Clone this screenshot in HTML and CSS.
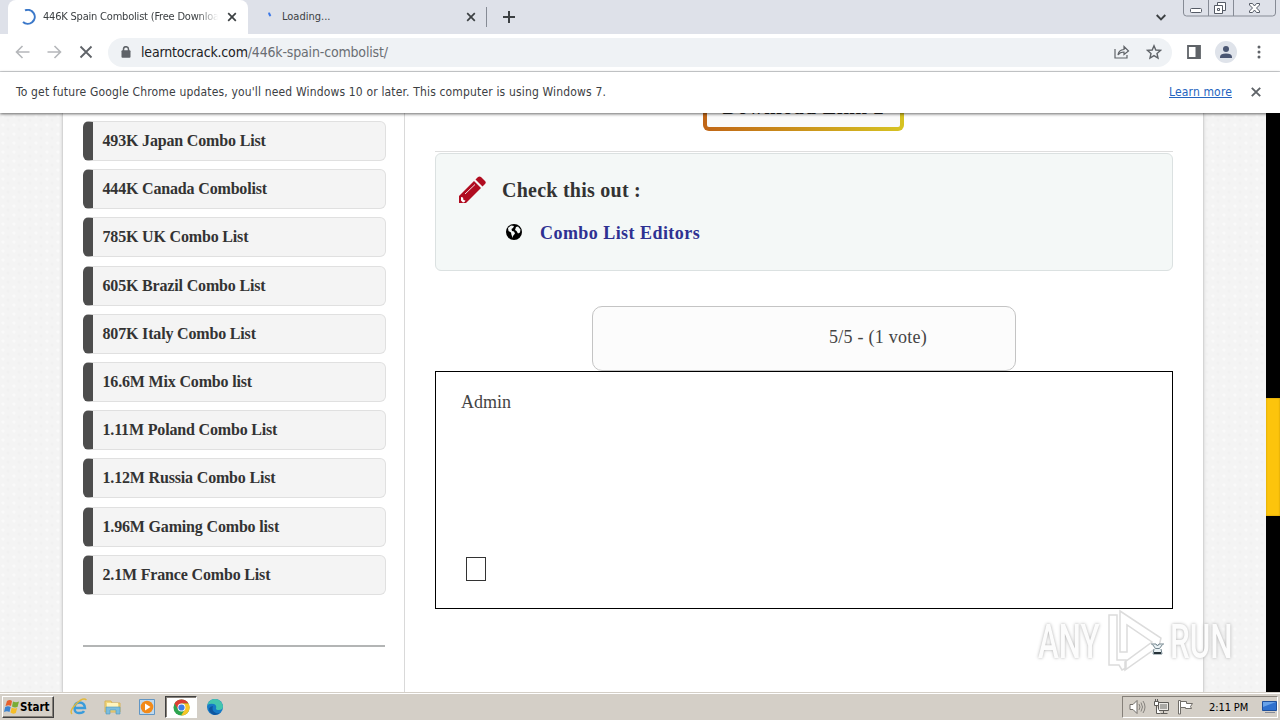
FILE: index.html
```html
<!DOCTYPE html>
<html lang="en">
<head>
    <meta charset="UTF-8">
    <meta name="viewport" content="width=device-width, initial-scale=1.0">
    <title>446K Spain Combolist</title>
    <link rel="stylesheet" href="styles.css">
</head>
<body>
    <!-- Tab strip -->
    <div class="tabs">
        <div class="tab active">
            <svg class="spinner" width="16" height="16" viewBox="0 0 16 16"><path d="M5 1.4A7 7 0 1 1 3 13" fill="none" stroke="#3b78c9" stroke-width="2"/></svg>
            <span class="tab-title fade">446K Spain Combolist (Free Download)</span>
            <svg width="10" height="10" viewBox="0 0 10 10"><path d="M1.2 1.2l7.6 7.6M8.8 1.2L1.2 8.8" stroke="#3c4043" stroke-width="1.7"/></svg>
        </div>
        <div class="tab second">
            <svg class="spinner" width="16" height="16" viewBox="0 0 16 16"><path d="M3 3.6Q3.2 5.6 4.6 7" fill="none" stroke="#3b78e7" stroke-width="2"/></svg>
            <span class="tab-title">Loading...</span>
            <svg width="10" height="10" viewBox="0 0 10 10"><path d="M1.2 1.2l7.6 7.6M8.8 1.2L1.2 8.8" stroke="#3c4043" stroke-width="1.7"/></svg>
        </div>
        <span class="tab-line"></span>
        <svg class="plus" width="12" height="12" viewBox="0 0 12 12"><path d="M6 0v12M0 6h12" stroke="#3c4043" stroke-width="2"/></svg>
        <svg class="tab-search" width="10" height="7" viewBox="0 0 10 7"><path d="M.7 1L5 5.3 9.3 1" fill="none" stroke="#3c4043" stroke-width="1.9"/></svg>
        <svg class="win-buttons" width="93" height="17" viewBox="0 0 93 17">
            <path d="M.5 0v13q0 3 3 3h86q3 0 3-3V0M25.5 0v16M50.5 0v16" fill="none" stroke="#868b95"/>
            <rect x="7.5" y="8.5" width="11" height="4" rx="1" fill="#fff" stroke="#555b66"/>
            <path d="M34.5 2.5h8v8h-8z" fill="#fff" stroke="#555b66"/>
            <path d="M31.5 5.5h8v8h-8zM34.5 8.5h2v2h-2z" fill="#fff" stroke="#555b66"/>
            <path d="M66.5 3.5h3l2 2.5 2-2.5h3v1.5l-3 3 3 3v1.5h-3l-2-2.5-2 2.5h-3v-1.5l3-3-3-3z" fill="#fff" stroke="#555b66"/>
        </svg>
    </div>

    <!-- Toolbar -->
    <div class="toolbar">
        <svg class="back" width="15" height="14" viewBox="0 0 15 14"><path d="M14.5 7H1.5M7.5 1L1.5 7l6 6" fill="none" stroke="#b5b7ba" stroke-width="1.6"/></svg>
        <svg class="forward" width="15" height="14" viewBox="0 0 15 14"><path d="M.5 7h13M7.5 1l6 6-6 6" fill="none" stroke="#b5b7ba" stroke-width="1.6"/></svg>
        <svg class="stop" width="14" height="14" viewBox="0 0 14 14"><path d="M1.5 1.5l11 11M12.5 1.5l-11 11" stroke="#5f6368" stroke-width="1.8"/></svg>
        <div class="omnibox">
            <svg class="lock" width="10" height="12" viewBox="0 0 10 12"><path d="M2.5 5V3.2a2.5 2.5 0 0 1 5 0V5" fill="none" stroke="#5f6368" stroke-width="1.5"/><rect x=".5" y="4.2" width="9" height="7.5" rx="1" fill="#5f6368"/></svg>
            <span class="url"><b>learntocrack.com</b>/446k-spain-combolist/</span>
            <svg class="share" width="16" height="14" viewBox="0 0 16 14"><path d="M1 4v9h12V10M4 10q.5-5 6-5.5V1.5l4.5 4.5L10 9.500V7q-4 0-6 3z" fill="none" stroke="#5f6368" stroke-width="1.2"/></svg>
            <svg width="16" height="16" viewBox="0 0 16 16"><path d="M8 1.8l1.8 4.2 4.7.4-3.500 3.100 1 4.500L8 11.600 4 14l1-4.500L1.500 6.400l4.700-.4z" fill="none" stroke="#5f6368" stroke-width="1.4"/></svg>
        </div>
        <svg class="panel-icon" width="14" height="14" viewBox="0 0 14 14"><path d="M1 1h12v12H1z" fill="#fff" stroke="#5f6368" stroke-width="1.8"/><path d="M8.5 1H13v12H8.5z" fill="#5f6368"/></svg>
        <svg class="avatar" width="22" height="22" viewBox="0 0 22 22"><circle cx="11" cy="11" r="11" fill="#dfe3ea"/><circle cx="11" cy="8" r="3" fill="#4a5672"/><path d="M5 17v-1.500Q5.500 12.500 11 12.500t6 3V17z" fill="#4a5672"/></svg>
        <svg class="menu" width="4" height="14" viewBox="0 0 4 14"><g fill="#5f6368"><circle cx="2" cy="2" r="1.5"/><circle cx="2" cy="7" r="1.5"/><circle cx="2" cy="12" r="1.5"/></g></svg>
    </div>

    <!-- Update notice -->
    <div class="infobar">
        <span class="notice">To get future Google Chrome updates, you'll need Windows 10 or later. This computer is using Windows 7.</span>
        <a class="learn" href="#">Learn more</a>
        <svg width="10" height="10" viewBox="0 0 10 10"><path d="M.8.8l8.4 8.4M9.2.8L.8 9.2" stroke="#5f6368" stroke-width="1.9"/></svg>
    </div>

    <!-- Page -->
    <div class="page">
        <div class="container">
            <div class="sidebar">
                <ul class="combo-list">
                    <li>493K Japan Combo List</li>
                    <li>444K Canada Combolist</li>
                    <li>785K UK Combo List</li>
                    <li>605K Brazil Combo List</li>
                    <li>807K Italy Combo List</li>
                    <li>16.6M Mix Combo list</li>
                    <li>1.11M Poland Combo List</li>
                    <li>1.12M Russia Combo List</li>
                    <li>1.96M Gaming Combo list</li>
                    <li>2.1M France Combo List</li>
                </ul>
                <div class="separator"></div>
            </div>
            <main class="content">
                <div class="download-clip"><div class="download">Download Link 2</div></div>
                <div class="rule"></div>
                <div class="check-box">
                    <div class="check-head">
                        <svg width="28" height="28" viewBox="0 0 28 28"><path d="M1 27v-7L16 5l7 7L8 27z" fill="#b00c20"/><path d="M17.500 3.500L20 1q1.500-1 3 0l4 4q1.500 1.500 0 3l-2.500 2.500z" fill="#b00c20"/><path d="M7 18L17 8.500" stroke="#f4e3e5"/><path d="M3 21l2 .5.5 2.500 2 .5-1 1.500-1.500.5-2-2z" fill="#fff"/></svg>
                        <span>Check this out :</span>
                    </div>
                    <div class="check-link">
                        <svg width="16" height="16" viewBox="0 0 16 16"><circle cx="8" cy="8" r="8" fill="#000"/><path d="M2 4l3-2.500 3 .5-1 2-1.500 1 .5 2 2 .5 1 2-2 2.500v2L5.500 11 5 8.500 2.500 7zM10 3l2-.5 2.500 3-.5 3-2 1-1.500-2.500L9 6z" fill="#f4f8f7"/></svg>
                        <a href="#">Combo List Editors</a>
                    </div>
                </div>
                <div class="rating">5/5 - (1 vote)</div>
                <div class="author">
                    <span class="author-name">Admin</span>
                    <span class="glyph-box"></span>
                </div>
            </main>
        </div>
        <div class="scrollbar"><div class="thumb"></div></div>
        <div class="watermark">
            <span class="word">ANY</span>
            <svg width="58" height="64" viewBox="0 0 58 64"><path d="M11 6H3v50h10l3 5 4-2v-8h-9zM14 2l41 27-2 8-34 24v-8l27-20-25-17v27h-7z" fill="#fff" fill-opacity=".8" stroke="#dcdcdc" stroke-width="1.5"/></svg>
            <span class="word">RUN</span>
        </div>
        <svg class="cursor" width="13" height="12" viewBox="0 0 13 12"><path d="M0 1h5l1.500 2L8 1h5M1.500 1.500l3 4h4l3-4M3 6l-1 5h9l-1-5" fill="#e9f1f4" stroke="#71838c"/><path d="M3 9h7v2H3z" fill="#263238"/></svg>
    </div>

    <!-- Taskbar -->
    <div class="taskbar">
        <div class="start">
            <svg width="16" height="16" viewBox="0 0 16 16"><path d="M3 2q3-2 5 0L7 7Q5 5.500 1.500 7z" fill="#e6602c"/><path d="M9 2.500q3 1.500 6 0L13.500 8q-3 1-5.500-.5z" fill="#79ac35"/><path d="M1.200 8Q4 6.500 6.700 8l-1.200 5q-2.500-1.500-5.500 0z" fill="#3b83d0"/><path d="M7.700 8.500q3 1.500 5.500.5l-1.400 5q-3 1.500-5.300-.5z" fill="#f5bd27"/></svg>
            <span>Start</span>
        </div>
        <div class="launch">
            <svg width="18" height="18" viewBox="0 0 18 18"><path d="M5 10h10Q14.500 4.500 9.500 4.500T4.500 10t5 5q3.500 0 4.500-2" fill="none" stroke="#3a9cdb" stroke-width="2.4"/><path d="M2 16Q-1 13 6 6T16.500 2" fill="none" stroke="#e2b93c" stroke-width="1.5"/></svg>
            <svg width="18" height="18" viewBox="0 0 18 18"><path d="M1 3h6l1 2h8v9H1z" fill="#f1d67b" stroke="#d7b35a"/><path d="M3 5h11v5H3z" fill="#fff4bd"/><path d="M2 9h14v7h-4v-4H6v4H2z" fill="#7cbddd" stroke="#4a98bd" stroke-width=".6"/></svg>
            <svg width="18" height="18" viewBox="0 0 18 18"><path d="M1.500 1.500h15v15h-15z" fill="#bfd9ee" stroke="#6196c4"/><circle cx="9" cy="9" r="6.3" fill="#f28a19"/><path d="M7 5.500v7L12.500 9z" fill="#fff"/></svg>
            <div class="pressed">
                <svg width="17" height="17" viewBox="0 0 18 18"><circle cx="9" cy="9" r="8.5" fill="#2da44f"/><path d="M1.600 4.800A8.500 8.500 0 0 1 16.400 4.800H9L5.400 11z" fill="#dc3e32"/><path d="M16.400 4.800A8.500 8.500 0 0 1 8.500 17.500L12.600 11 9 4.800z" fill="#f8c526"/><circle cx="9" cy="9" r="4.2" fill="#fff"/><circle cx="9" cy="9" r="3.3" fill="#3d7ee6"/></svg>
            </div>
            <svg width="18" height="18" viewBox="0 0 18 18"><circle cx="9" cy="9" r="8" fill="#167ac6"/><path d="M1.500 7Q3 1 9 1t8 7q0 4-4 4-3 0-3-1.500Q11 7 8 6 4 5 1.500 7z" fill="#43c5ae"/><path d="M7 8q-2 5 3 7 3 1 5-1-3 3.500-7 3Q3 15 3 10.500 4 8 7 8z" fill="#0f56a0"/></svg>
        </div>
        <div class="tray">
            <svg width="17" height="16" viewBox="0 0 17 16"><path d="M1 5.500h3L8 1.500v13l-4-4H1z" fill="#fff" stroke="#706d68"/><path d="M10 5q2 3 0 6M12 3.500q3 4.500 0 9M14 2q4 6 0 12" fill="none" stroke="#85827d"/></svg>
            <svg width="17" height="16" viewBox="0 0 17 16"><path d="M5.500 3.500h10v8h-10zM7.500 14.500h7M10.500 11.500v3" fill="#eceae6" stroke="#5d5b57"/><path d="M7 5h7v5H7z" fill="#aaa9a5"/><path d="M1.500 2.500h4v4h-4zM2.500 0v2M4.500 0v2M3.500 7v7.500h4" fill="#fff" stroke="#5d5b57"/></svg>
            <svg width="17" height="16" viewBox="0 0 17 16"><path d="M1.500 15V1.500h2V15z" fill="#fff" stroke="#706d68"/><path d="M3.500 2.500h6v2h6l-2 3 1 2h-6v-1h-5z" fill="#fff" stroke="#706d68"/></svg>
            <span class="clock">2:11 PM</span>
            <svg width="15" height="14" viewBox="0 0 15 14"><path d="M.5 1.500h14v9H.5z" fill="#2e70ce" stroke="#1d4f9c"/><path d="M1 2h13L1 7z" fill="#68a2e9"/><path d="M3 12.500h10" stroke="#858b98"/></svg>
        </div>
    </div>
</body>
</html>
```

FILE: styles.css
```css
* {
    box-sizing: border-box;
}
body {
    margin: 0;
    width: 1280px;
    height: 720px;
    overflow: hidden;
    display: flex;
    flex-direction: column;
    font-family: "DejaVu Sans Condensed", "DejaVu Sans", sans-serif;
    font-size: 11px;
    color: #3c4043;
    background-color: #fff;
}
svg {
    flex: none;
    display: block;
}

/* Tab strip */
.tabs {
    height: 34px;
    flex: none;
    display: flex;
    align-items: center;
    background-color: #dee1e9;
    padding-left: 8px;
}
.tab {
    height: 34px;
    display: flex;
    align-items: center;
    width: 240px;
    padding: 0 11px 0 12px;
}
.tab.active {
    background-color: #fff;
    border-radius: 8px 8px 0 0;
}
.tab.second {
    width: 238px;
    padding: 0 10px 0 18px;
}
.tab-title {
    flex: 1;
    margin-left: 7px;
    margin-right: 9px;
    white-space: nowrap;
    overflow: hidden;
    line-height: 16px;
}
.second .tab-title {
    margin-left: 0;
}
.fade {
    letter-spacing: -0.2px;
    -webkit-mask-image: linear-gradient(to right, #000 88%, transparent);
    mask-image: linear-gradient(to right, #000 88%, transparent);
}
.tab-line {
    width: 1px;
    height: 20px;
    background-color: #868b95;
}
.plus {
    margin-left: 16px;
}
.tab-search {
    margin-left: auto;
}
.win-buttons {
    align-self: flex-start;
    margin: 0 4px 0 17px;
}

/* Toolbar */
.toolbar {
    height: 38px;
    flex: none;
    display: flex;
    align-items: center;
    padding: 0 19px 1px 15px;
    border-bottom: 1px solid #d5d7da;
}
.forward {
    margin-left: 17px;
}
.stop {
    margin: 0 15px 0 17px;
}
.omnibox {
    flex: 1;
    height: 29px;
    display: flex;
    align-items: center;
    background-color: #eff2f5;
    border-radius: 15px;
    padding: 0 10px 0 13px;
}
.url {
    flex: 1;
    margin-left: 10px;
    font-size: 14px;
    letter-spacing: -0.17px;
    color: #6a6e73;
}
.url b {
    font-weight: normal;
    color: #202124;
}
.share {
    margin-right: 16px;
}
.panel-icon {
    margin-left: 15px;
}
.avatar {
    margin: 0 20px 0 14px;
}

/* Update notice */
.infobar {
    height: 41px;
    flex: none;
    display: flex;
    align-items: center;
    padding: 0 19px 2px 16px;
    font-size: 12px;
    background-color: #fff;
    box-shadow: 0 1px 3px rgba(0, 0, 0, 0.6);
    position: relative;
    z-index: 2;
}
.notice {
    flex: 1;
    white-space: nowrap;
    letter-spacing: 0.16px;
}
.learn {
    color: #2464c0;
    margin-right: 19px;
    letter-spacing: 0.15px;
}

/* Page */
.page {
    flex: 1;
    min-height: 0;
    display: flex;
    position: relative;
    overflow: hidden;
    font-family: "Liberation Serif", serif;
    background-color: #f4f4f4;
    background-image: radial-gradient(circle at 3px 3px, #f9f9f9 1px, transparent 2px), radial-gradient(circle at 8px 7px, #f1f1f1 1px, transparent 2px);
    background-size: 11px 9px;
}
.container {
    width: 1142px;
    margin-left: 62px;
    display: flex;
    background-color: #fff;
    border: solid #d5d5d5;
    border-width: 0 1px;
    box-shadow: 0 0 3px rgba(0, 0, 0, 0.15);
}
.sidebar {
    width: 342px;
    padding: 8px 18px 0 20px;
    border-right: 1px solid #d9d9d9;
}
.combo-list {
    list-style: none;
    margin: 0;
    padding: 0;
    display: flex;
    flex-direction: column;
    gap: 8.2px;
}
.combo-list li {
    height: 40px;
    width: 303px;
    line-height: 38px;
    padding-left: 9.5px;
    font-size: 16px;
    font-weight: bold;
    letter-spacing: -0.17px;
    color: #333;
    background-color: #f4f4f4;
    border: 1px solid #e0e0e0;
    border-left: 10px solid #4d4d4d;
    border-radius: 6px;
    white-space: nowrap;
}
.separator {
    width: 302px;
    height: 2px;
    margin-top: 50px;
    background-color: #b3b5b5;
}
.content {
    width: 798px;
    padding: 0 30px;
}
.download-clip {
    height: 18px;
    display: flex;
    align-items: flex-end;
    justify-content: center;
    padding-right: 1px;
}
.download {
    width: 201px;
    height: 46px;
    flex: none;
    border: 4px solid transparent;
    border-radius: 6px;
    background: linear-gradient(#fafafa, #fafafa) padding-box, linear-gradient(to right, #c06516, #d6c322) border-box;
    font-size: 20px;
    font-weight: bold;
    letter-spacing: 0.95px;
    line-height: 37px;
    text-align: center;
    color: #222;
}
.rule {
    height: 1px;
    margin: 20px 0 1px;
    background-color: #dedede;
}
.check-box {
    height: 118px;
    padding: 22px;
    background-color: #f4f8f7;
    border: 1px solid #dbe1e1;
    border-radius: 6px;
    font-weight: bold;
}
.check-head {
    display: flex;
    align-items: center;
    gap: 16px;
    font-size: 20px;
    letter-spacing: 0.25px;
    color: #333;
}
.check-link {
    display: flex;
    align-items: center;
    gap: 18px;
    margin: 18px 0 0 48px;
    font-size: 18px;
    letter-spacing: 0.45px;
    line-height: 22px;
}
.check-link svg {
    margin-bottom: 2px;
}
.check-link a {
    color: #2e3192;
    text-decoration: none;
}
.rating {
    width: 424px;
    height: 65px;
    margin: 35px auto 0;
    padding-left: 236px;
    line-height: 61px;
    font-size: 18px;
    letter-spacing: 0.25px;
    color: #444;
    background-color: #fcfcfc;
    border: 1px solid #c4c4c4;
    border-radius: 10px;
}
.author {
    height: 238px;
    padding: 19px 25px 27px;
    display: flex;
    flex-direction: column;
    justify-content: space-between;
    border: 1px solid #000;
    font-size: 18px;
    color: #444;
}
.author-name {
    line-height: 22px;
}
.glyph-box {
    width: 20px;
    height: 24px;
    margin-left: 5px;
    border: 1px solid #333;
}
.scrollbar {
    width: 14px;
    margin-left: auto;
    padding-top: 285px;
    background-color: #000;
}
.thumb {
    height: 118px;
    background-color: #fcc40c;
    box-shadow: inset 0 0 2px #b98d00;
}
.watermark {
    position: absolute;
    left: 1038px;
    top: 496px;
    display: flex;
    align-items: center;
    gap: 6px;
    font-family: Roboto, sans-serif;
    font-size: 49px;
    font-weight: 500;
    color: #fcfcfc;
    text-shadow: 0 0 4px #aaa;
}
.word {
    width: 62px;
    transform: scaleX(0.64);
    transform-origin: left;
}
.cursor {
    position: absolute;
    left: 1151px;
    top: 530px;
}

/* Taskbar */
.taskbar {
    height: 28px;
    flex: none;
    display: flex;
    align-items: center;
    padding: 1px 2px 0;
    background-color: #d4cfc7;
    border-top: 1px solid #d4cfc7;
    box-shadow: inset 0 1px #fff;
    color: #000;
}
.start {
    width: 52px;
    height: 22px;
    display: flex;
    align-items: center;
    padding-left: 1px;
    border: 1px solid;
    border-color: #fff #404040 #404040 #fff;
    box-shadow: inset -1px -1px #858079;
    font-weight: bold;
    font-size: 11.5px;
}
.launch {
    display: flex;
    align-items: center;
    margin-left: 16px;
    gap: 16px;
}
.pressed {
    width: 32px;
    height: 22px;
    margin: 0 -7px 0 -7px;
    display: flex;
    align-items: center;
    justify-content: center;
    background-color: #fff;
    border: 1px solid;
    border-color: #404040 #fff #fff #404040;
    box-shadow: inset 1px 1px #858079;
}
.tray {
    width: 156px;
    height: 22px;
    margin-left: auto;
    display: flex;
    align-items: center;
    gap: 7px;
    padding-left: 6px;
    border: 1px solid;
    border-color: #858079 #fff #fff #858079;
}
.clock {
    margin: 0 5px 0 8px;
    width: 41px;
    white-space: nowrap;
    letter-spacing: -0.1px;
}
```
